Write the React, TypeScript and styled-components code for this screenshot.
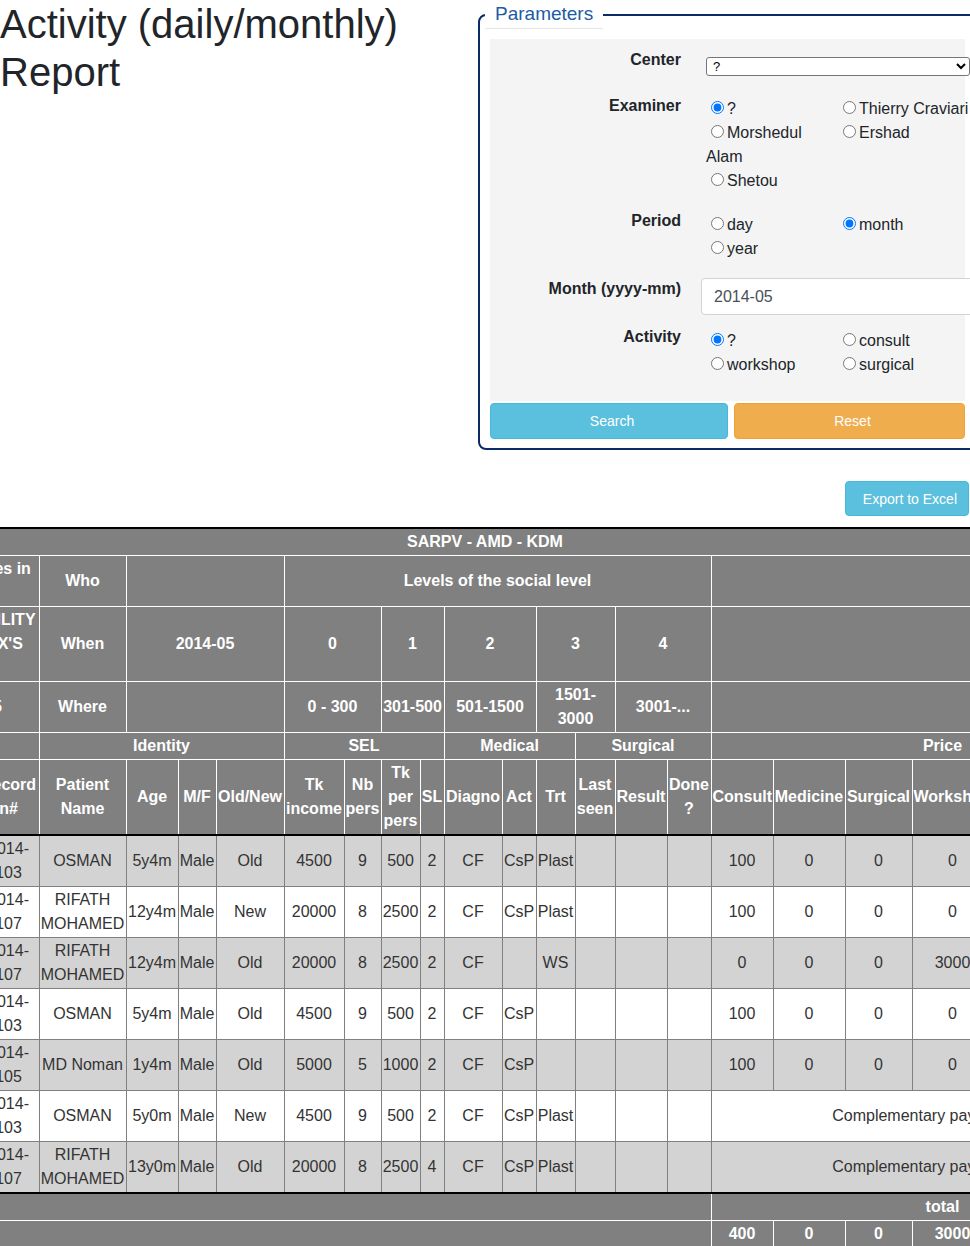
import React from 'react';
import styled, { createGlobalStyle } from 'styled-components';

const GlobalStyle = createGlobalStyle`
  * { box-sizing: border-box; }
  html, body {
    margin: 0;
    padding: 0;
    background: #ffffff;
  }
  body {
    font-family: "Liberation Sans", Arial, sans-serif;
    font-size: 16px;
    line-height: 1.5;
    color: #212529;
    overflow: hidden;
  }
`;

const Page = styled.div`
  width: 970px;
  overflow: hidden;
`;

const TopSection = styled.div`
  display: flex;
  align-items: flex-start;
`;

const TitleCol = styled.div`
  width: 478px;
  flex-shrink: 0;
`;

const Title = styled.h1`
  margin: 0;
  font-size: 40px;
  line-height: 48px;
  font-weight: 500;
`;

const ParamFieldset = styled.fieldset`
  width: 499px;
  flex-shrink: 0;
  min-width: 0;
  margin: 0;
  padding: 10px 10px 9px;
  border: 2px solid #0b2b63;
  border-radius: 8px;
`;

const Legend = styled.legend`
  margin-left: -5px;
  padding: 0 10px;
  font-size: 19px;
  line-height: 28px;
  color: #1d5ba4;
  border-bottom: 1px solid #e5e5e5;
`;

const FormPanel = styled.div`
  background: #f4f4f4;
  padding: 9px 0 24px;
`;

const FormRow = styled.div<{ $mb?: number }>`
  display: grid;
  grid-template-columns: 206px 1fr;
  margin-bottom: ${(p) => p.$mb ?? 0}px;
`;

const FieldLabel = styled.label`
  text-align: right;
  padding-right: 15px;
  font-weight: bold;
  line-height: 24px;
`;

const CenterSelect = styled.select`
  display: block;
  width: 264px;
  height: 19px;
  margin: 9px 0 0 10px;
  padding: 0 2px;
  font-family: "Liberation Sans", Arial, sans-serif;
  font-size: 13px;
  color: #000;
  background: #fff;
  border: 1px solid #767676;
  border-radius: 3px;
`;

const RadioGrid = styled.div<{ $pt: number }>`
  display: grid;
  grid-template-columns: 132px 150px;
  margin-left: 10px;
  padding-top: ${(p) => p.$pt}px;
`;

const RadioLabel = styled.label`
  display: block;
  line-height: 24px;
`;

const RadioInput = styled.input`
  margin: 3px 3px 0 5px;
`;

const MonthInput = styled.input`
  display: block;
  width: 290px;
  height: 37px;
  margin: 1px 0 0 5px;
  padding: 6px 12px;
  font-family: "Liberation Sans", Arial, sans-serif;
  font-size: 16px;
  color: #495057;
  background: #fff;
  border: 1px solid #ced4da;
  border-radius: 4px;
`;

const ButtonRow = styled.div`
  display: grid;
  grid-template-columns: 238px 1fr;
  gap: 6px;
  margin-top: 2px;
`;

const ActionButton = styled.button<{ $variant: 'info' | 'warning' }>`
  height: 36px;
  padding: 0 0 0 6px;
  font-family: "Liberation Sans", Arial, sans-serif;
  font-size: 14px;
  color: #fff;
  border-radius: 4px;
  border: 1px solid ${(p) => (p.$variant === 'info' ? '#46b8da' : '#eea236')};
  background: ${(p) => (p.$variant === 'info' ? '#5bc0de' : '#f0ad4e')};
`;

const ExportRow = styled.div`
  display: flex;
  justify-content: flex-end;
  padding-right: 1px;
  margin-top: 31px;
`;

const ExportButton = styled.button`
  height: 35px;
  padding: 0 11px 0 17px;
  font-family: "Liberation Sans", Arial, sans-serif;
  font-size: 14px;
  color: #fff;
  background: #5bc0de;
  border: 1px solid #46b8da;
  border-radius: 4px;
`;

const TableArea = styled.div`
  display: flex;
  justify-content: center;
  margin-top: 11px;
`;

const ReportTable = styled.table`
  flex-shrink: 0;
  width: 1378px;
  table-layout: fixed;
  border-collapse: collapse;
  font-size: 16px;
  line-height: 24px;
`;

const Col = styled.col<{ $w: number }>`
  width: ${(p) => p.$w}px;
`;

const HeadRow = styled.tr<{ $first?: boolean; $last?: boolean }>`
  th {
    ${(p) => (p.$first ? 'border-top: 2px solid #000;' : '')}
    ${(p) => (p.$last ? 'border-bottom: 2px solid #000;' : '')}
  }
`;

const Th = styled.th`
  padding: 1px;
  background: #808080;
  color: #fff;
  font-weight: bold;
  text-align: center;
  vertical-align: middle;
  border: 1px solid #fff;
`;

const BodyRow = styled.tr<{ $alt: boolean }>`
  background: ${(p) => (p.$alt ? '#d3d3d3' : '#ffffff')};
`;

const Td = styled.td`
  padding: 1px;
  color: #333;
  text-align: center;
  vertical-align: middle;
  border: 1px solid #808080;
`;

const FootRow = styled.tr<{ $first?: boolean }>`
  td {
    ${(p) => (p.$first ? 'border-top: 2px solid #000;' : '')}
  }
`;

const FootCell = styled.td`
  padding: 1px;
  background: #808080;
  color: #fff;
  font-weight: bold;
  text-align: center;
  vertical-align: middle;
  border: 1px solid #fff;
`;

const colWidths = [92, 90, 61, 87, 52, 38, 68, 60, 37, 39, 24, 58, 34, 39, 40, 52, 44, 62, 72, 67, 81, 87, 94];

const columnHeads = [
  'Date', 'Center', 'Record n#', 'Patient Name', 'Age', 'M/F', 'Old/New',
  'Tk income', 'Nb pers', 'Tk per pers', 'SL', 'Diagno', 'Act', 'Trt',
  'Last seen', 'Result', 'Done ?', 'Consult', 'Medicine', 'Surgical',
  'Workshop', 'Total', 'Paid',
];

type Visit = {
  cells: string[];
  prices?: string[];
  complement?: string;
};

const visits: Visit[] = [
  {
    cells: ['2014-05-03', 'KDM', '2014-103', 'OSMAN', '5y4m', 'Male', 'Old', '4500', '9', '500', '2', 'CF', 'CsP', 'Plast', '', '', ''],
    prices: ['100', '0', '0', '0', '100', '100'],
  },
  {
    cells: ['2014-05-06', 'KDM', '2014-107', 'RIFATH MOHAMED', '12y4m', 'Male', 'New', '20000', '8', '2500', '2', 'CF', 'CsP', 'Plast', '', '', ''],
    prices: ['100', '0', '0', '0', '100', '100'],
  },
  {
    cells: ['2014-05-06', 'KDM', '2014-107', 'RIFATH MOHAMED', '12y4m', 'Male', 'Old', '20000', '8', '2500', '2', 'CF', '', 'WS', '', '', ''],
    prices: ['0', '0', '0', '3000', '3000', '3000'],
  },
  {
    cells: ['2014-05-12', 'KDM', '2014-103', 'OSMAN', '5y4m', 'Male', 'Old', '4500', '9', '500', '2', 'CF', 'CsP', '', '', '', ''],
    prices: ['100', '0', '0', '0', '100', '100'],
  },
  {
    cells: ['2014-05-15', 'KDM', '2014-105', 'MD Noman', '1y4m', 'Male', 'Old', '5000', '5', '1000', '2', 'CF', 'CsP', '', '', '', ''],
    prices: ['100', '0', '0', '0', '100', '100'],
  },
  {
    cells: ['2014-05-20', 'KDM', '2014-103', 'OSMAN', '5y0m', 'Male', 'New', '4500', '9', '500', '2', 'CF', 'CsP', 'Plast', '', '', ''],
    complement: 'Complementary payment (500)',
  },
  {
    cells: ['2014-05-27', 'KDM', '2014-107', 'RIFATH MOHAMED', '13y0m', 'Male', 'Old', '20000', '8', '2500', '4', 'CF', 'CsP', 'Plast', '', '', ''],
    complement: 'Complementary payment (500)',
  },
];

function RadioGroup({ name, options, checked, pt }: { name: string; options: string[]; checked: string; pt: number }) {
  return (
    <RadioGrid $pt={pt}>
      {options.map((o) => (
        <RadioLabel key={o}>
          <RadioInput type="radio" name={name} defaultChecked={o === checked} />
          {o}
        </RadioLabel>
      ))}
    </RadioGrid>
  );
}

function Parameters() {
  return (
    <ParamFieldset>
      <Legend>Parameters</Legend>
      <FormPanel>
        <FormRow $mb={18}>
          <FieldLabel>Center</FieldLabel>
          <div>
            <CenterSelect defaultValue="?">
              <option value="?">?</option>
              <option value="KDM">KDM</option>
            </CenterSelect>
          </div>
        </FormRow>
        <FormRow $mb={16}>
          <FieldLabel>Examiner</FieldLabel>
          <RadioGroup name="examiner" checked="?" pt={3} options={['?', 'Thierry Craviari', 'Morshedul Alam', 'Ershad', 'Shetou']} />
        </FormRow>
        <FormRow $mb={16}>
          <FieldLabel>Period</FieldLabel>
          <RadioGroup name="period" checked="month" pt={4} options={['day', 'month', 'year']} />
        </FormRow>
        <FormRow $mb={10}>
          <FieldLabel>Month (yyyy-mm)</FieldLabel>
          <div>
            <MonthInput type="text" defaultValue="2014-05" />
          </div>
        </FormRow>
        <FormRow>
          <FieldLabel>Activity</FieldLabel>
          <RadioGroup name="activity" checked="?" pt={4} options={['?', 'consult', 'workshop', 'surgical']} />
        </FormRow>
      </FormPanel>
      <ButtonRow>
        <ActionButton $variant="info">Search</ActionButton>
        <ActionButton $variant="warning">Reset</ActionButton>
      </ButtonRow>
    </ParamFieldset>
  );
}

function Report() {
  return (
    <ReportTable>
      <colgroup>
        {colWidths.map((w, i) => (
          <Col key={i} $w={w} />
        ))}
      </colgroup>
      <thead>
        <HeadRow $first>
          <Th colSpan={23}>SARPV - AMD - KDM</Th>
        </HeadRow>
        <HeadRow>
          <Th colSpan={3}>Numbers of given activities in the month</Th>
          <Th>Who</Th>
          <Th colSpan={3}></Th>
          <Th colSpan={10}>Levels of the social level</Th>
          <Th colSpan={6}></Th>
        </HeadRow>
        <HeadRow>
          <Th colSpan={3}>CHILDREN WITH A DISABILITY CLUBFOOT, CP, OTHER X'S (KDM)</Th>
          <Th>When</Th>
          <Th colSpan={3}>2014-05</Th>
          <Th colSpan={2}>0</Th>
          <Th colSpan={2}>1</Th>
          <Th colSpan={2}>2</Th>
          <Th colSpan={2}>3</Th>
          <Th colSpan={2}>4</Th>
          <Th colSpan={6}></Th>
        </HeadRow>
        <HeadRow>
          <Th colSpan={3}>Number of patients : 5</Th>
          <Th>Where</Th>
          <Th colSpan={3}></Th>
          <Th colSpan={2}>0 - 300</Th>
          <Th colSpan={2}>301-500</Th>
          <Th colSpan={2}>501-1500</Th>
          <Th colSpan={2}>1501-3000</Th>
          <Th colSpan={2}>3001-...</Th>
          <Th colSpan={6}></Th>
        </HeadRow>
        <HeadRow>
          <Th colSpan={3}></Th>
          <Th colSpan={4}>Identity</Th>
          <Th colSpan={4}>SEL</Th>
          <Th colSpan={3}>Medical</Th>
          <Th colSpan={3}>Surgical</Th>
          <Th colSpan={6}>Price</Th>
        </HeadRow>
        <HeadRow $last>
          {columnHeads.map((h) => (
            <Th key={h}>{h}</Th>
          ))}
        </HeadRow>
      </thead>
      <tbody>
        {visits.map((v, i) => (
          <BodyRow key={i} $alt={i % 2 === 0}>
            {v.cells.map((c, j) => (
              <Td key={j}>{c}</Td>
            ))}
            {v.prices ? v.prices.map((p, j) => <Td key={`p${j}`}>{p}</Td>) : <Td colSpan={6}>{v.complement}</Td>}
          </BodyRow>
        ))}
      </tbody>
      <tfoot>
        <FootRow $first>
          <FootCell colSpan={17}></FootCell>
          <FootCell colSpan={6}>total</FootCell>
        </FootRow>
        <FootRow>
          <FootCell colSpan={17}></FootCell>
          <FootCell>400</FootCell>
          <FootCell>0</FootCell>
          <FootCell>0</FootCell>
          <FootCell>3000</FootCell>
          <FootCell>3400</FootCell>
          <FootCell>3400</FootCell>
        </FootRow>
      </tfoot>
    </ReportTable>
  );
}

export default function App() {
  return (
    <Page>
      <GlobalStyle />
      <TopSection>
        <TitleCol>
          <Title>
            Activity (daily/monthly)
            <br />
            Report
          </Title>
        </TitleCol>
        <Parameters />
      </TopSection>
      <ExportRow>
        <ExportButton>Export to Excel</ExportButton>
      </ExportRow>
      <TableArea>
        <Report />
      </TableArea>
    </Page>
  );
}
